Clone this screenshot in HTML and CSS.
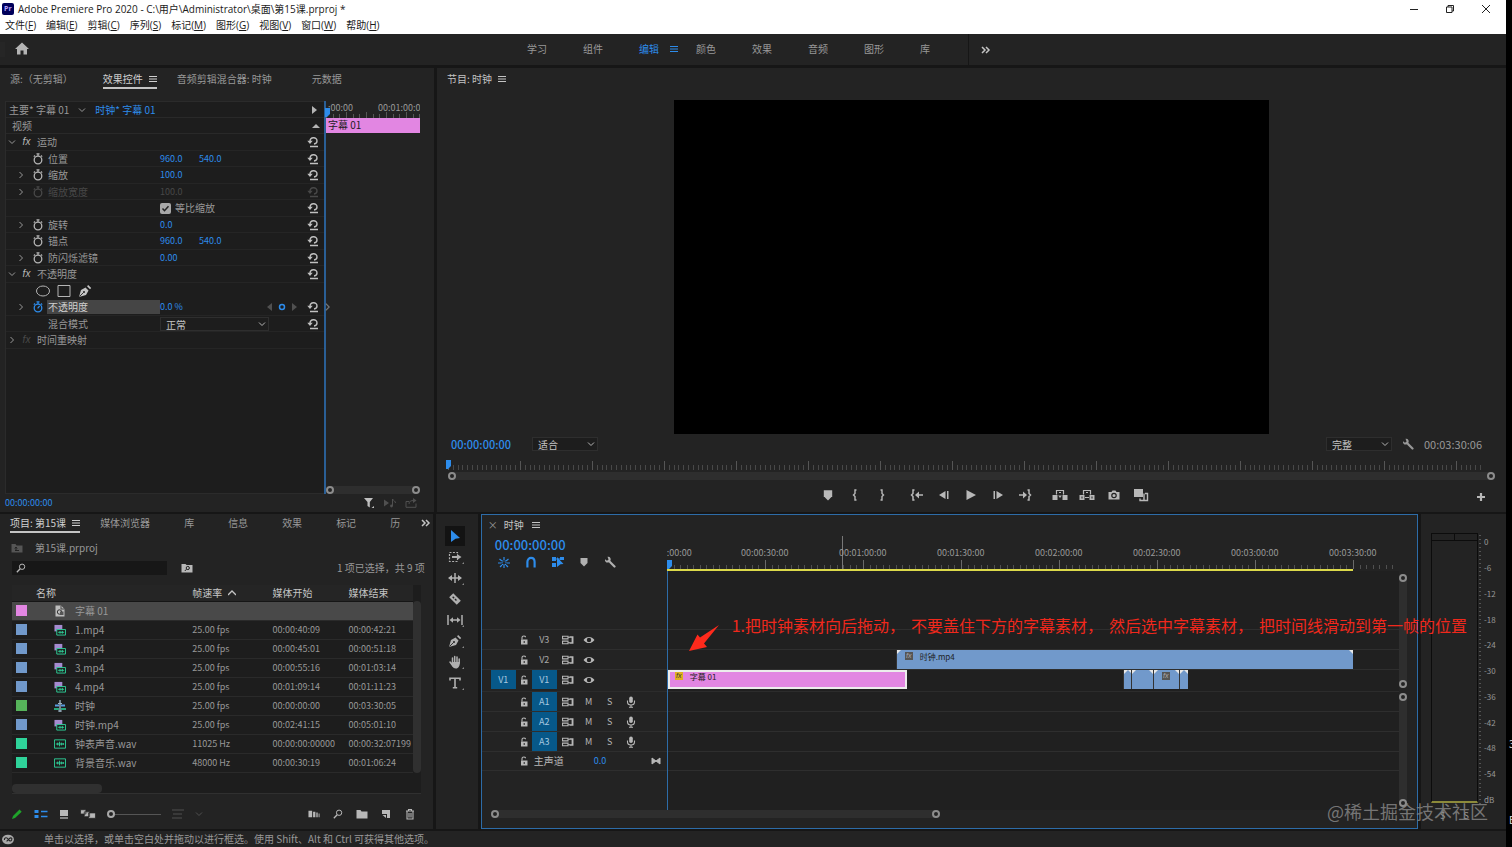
FILE: index.html
```html
<!DOCTYPE html>
<html lang="zh-CN">
<head>
    <meta charset="UTF-8">
    <meta name="viewport" content="width=device-width, initial-scale=1.0">
    <title>Adobe Premiere Pro 2020</title>
    <link rel="stylesheet" href="styles.css">
</head>
<body>
    <svg class="sprite" aria-hidden="true">
        <symbol id="menu" viewBox="0 0 8 8"><path d="M0 1.5h8M0 4h8M0 6.5h8" stroke="currentColor" fill="none"/></symbol>
        <symbol id="more" viewBox="0 0 10 8"><path d="M1 1l3 3-3 3M5 1l3 3-3 3" stroke="currentColor" stroke-width="1.5" fill="none"/></symbol>
        <symbol id="down" viewBox="0 0 8 8"><path d="M1 2.5l3 3 3-3" stroke="currentColor" fill="none"/></symbol>
        <symbol id="right" viewBox="0 0 8 8"><path d="M2.5 1l3 3-3 3" stroke="currentColor" fill="none"/></symbol>
        <symbol id="up" viewBox="0 0 8 8"><path d="M0 6l4-4 4 4" stroke="currentColor" stroke-width="1.3" fill="none"/></symbol>
        <symbol id="watch" viewBox="0 0 12 12"><circle cx="6" cy="7" r="3.8" stroke="currentColor" stroke-width="1.3" fill="none"/><path d="M4.5.8h3M6 1v2M9 2.5l1.2 1.2M3 2.5L1.8 3.7" stroke="currentColor" stroke-width="1.2"/></symbol>
        <symbol id="watch-on" viewBox="0 0 12 12"><circle cx="6" cy="7" r="3.8" stroke="currentColor" stroke-width="1.3" fill="none"/><path d="M4.5.8h3M6 1v2M9 2.5l1.2 1.2M3 2.5L1.8 3.7M5.6 7.4l2-2.4" stroke="currentColor" stroke-width="1.2"/></symbol>
        <symbol id="reset" viewBox="0 0 12 12"><path d="M3 5.500C3 .800 10 .500 10 5c0 1.800-1.200 2.800-3 3M3 10.500h8" stroke="currentColor" stroke-width="1.400" fill="none"/><path d="M.300 4.800h5.400L3 8z" fill="currentColor"/></symbol>
        <symbol id="pen" viewBox="0 0 14 14"><path d="M1 13l2-7 4.500-2.500 3 3L8 11z" fill="currentColor"/><path d="M9 2.200L10.200 1l3 3L12 5.200z" fill="currentColor"/><path d="M1.500 12.500l4-4" stroke="#222" stroke-width=".9"/><circle cx="6" cy="8" r="1" fill="#222"/></symbol>
        <symbol id="funnel" viewBox="0 0 12 12"><path d="M1 1h9L6.800 5v5.500L4.500 9V5z" fill="currentColor"/><path d="M8.500 11l2.500 0 0-2z" fill="currentColor"/></symbol>
        <symbol id="playnote" viewBox="0 0 14 10"><path d="M1 1.500l5 3.500-5 3.500z" fill="currentColor"/><path d="M9.500 8V1c1 2 3 2 3 4" stroke="currentColor" fill="none"/><circle cx="8.500" cy="8" r="1.400" fill="currentColor"/></symbol>
        <symbol id="share" viewBox="0 0 12 10"><path d="M4 3.500H1V9.300h10V5.500M4 6c0-3 2-3.500 5-3.500" stroke="currentColor" fill="none"/><path d="M8 0l3.500 2.500L8 5z" fill="currentColor"/></symbol>
        <symbol id="mark" viewBox="0 0 10 10"><path d="M1.500 1h7v5L5 9.500 1.500 6z" fill="currentColor"/></symbol>
        <symbol id="in" viewBox="0 0 10 12"><path d="M6.500 1H5v3.500L3.500 6 5 7.500V11h1.500" stroke="currentColor" stroke-width="1.400" fill="none"/></symbol>
        <symbol id="out" viewBox="0 0 10 12"><path d="M3.500 1H5v3.500L6.500 6 5 7.500V11H3.500" stroke="currentColor" stroke-width="1.400" fill="none"/></symbol>
        <symbol id="goin" viewBox="0 0 14 12"><path d="M4.500 1H3v3.500L1.500 6 3 7.500V11h1.500M8 6h5" stroke="currentColor" stroke-width="1.500" fill="none"/><path d="M5 6l4-3.500v7z" fill="currentColor"/></symbol>
        <symbol id="goout" viewBox="0 0 14 12"><path d="M9.500 1H11v3.500L12.500 6 11 7.500V11H9.500M1 6h5" stroke="currentColor" stroke-width="1.500" fill="none"/><path d="M9 6L5 2.500v7z" fill="currentColor"/></symbol>
        <symbol id="back" viewBox="0 0 12 12"><path d="M1 6l6.500-4v8zM9 2h1.500v8H9z" fill="currentColor"/></symbol>
        <symbol id="play" viewBox="0 0 12 12"><path d="M1.500 1L11 6l-9.500 5z" fill="currentColor"/></symbol>
        <symbol id="step" viewBox="0 0 12 12"><path d="M11 6L4.500 2v8zM1.500 2H3v8H1.500z" fill="currentColor"/></symbol>
        <symbol id="lift" viewBox="0 0 16 12"><path d="M.500 6h5v5H.500zM10.500 6h5v5h-5z" fill="currentColor"/><path d="M4.500 5.500v-4h7v4M7 3.500h2" stroke="currentColor" stroke-width="1.200" fill="none"/><path d="M6.200 6.500h3.600L8 9z" fill="currentColor"/></symbol>
        <symbol id="extract" viewBox="0 0 16 12"><path d="M.500 6h5v5H.500zM10.500 6h5v5h-5z" fill="currentColor"/><path d="M4.500 5.500v-4h7v4M6 8.500h4M7 3.500h2" stroke="currentColor" stroke-width="1.200" fill="none"/><path d="M3 7.500v2M13 7.500v2" stroke="#222"/></symbol>
        <symbol id="camera" viewBox="0 0 12 12"><path d="M.500 3H3.500l1-1.500h3l1 1.500h3v7.500H.500z" fill="currentColor"/><circle cx="6" cy="6.500" r="2.200" fill="none" stroke="#222" stroke-width="1.200"/></symbol>
        <symbol id="compare" viewBox="0 0 16 14"><path d="M1 1h9v8H1z" fill="currentColor"/><path d="M12 5.500h2.500v7H7V10.500M11 5.500V12" stroke="currentColor" stroke-width="1.400" fill="none"/></symbol>
        <symbol id="plus" viewBox="0 0 10 10"><path d="M5 1v8M1 5h8" stroke="currentColor" stroke-width="2.200"/></symbol>
        <symbol id="wrench" viewBox="0 0 12 12"><path d="M5.500 5.500L10.500 10.500" stroke="currentColor" stroke-width="2.200" stroke-linecap="round"/><path d="M3.500 0.800C6 .300 7.300 2.500 6.500 4.500L4.500 6.500C2.500 7 .500 5.500 1 3.200l2 1.600 1.600-1.200z" fill="currentColor"/></symbol>
        <symbol id="glass" viewBox="0 0 12 12"><circle cx="7.300" cy="4.500" r="3.200" stroke="currentColor" stroke-width="1.200" fill="none"/><path d="M5 7l-4 4" stroke="currentColor" stroke-width="1.600"/></symbol>
        <symbol id="folder" viewBox="0 0 12 10"><path d="M.500 1h4l1 1.500h6V9.500H.500z" fill="currentColor"/></symbol>
        <symbol id="folder-up" viewBox="0 0 12 10"><path d="M.500 1h4l1 1.500h6V9.500H.500z" fill="currentColor"/><path d="M4 7.500h4M5 7.500V4.500M3.800 5.500L5 4l1.200 1.500" stroke="#222" fill="none"/></symbol>
        <symbol id="folder-find" viewBox="0 0 12 10"><path d="M.500 1h4l1 1h6V9.500H.500z" fill="currentColor"/><circle cx="6.800" cy="5" r="1.600" stroke="#222" fill="none"/><path d="M5.500 6.200L3.800 8" stroke="#222"/></symbol>
        <symbol id="title" viewBox="0 0 12 12"><path d="M1.500.500h5.500l3.500 3.500v7.500h-9z" fill="#bdbdbd"/><path d="M7 .500V4h3.500" stroke="#444" fill="none"/><circle cx="5.500" cy="7" r="2.200" fill="none" stroke="#333"/><path d="M6 6.500h3.500v3.500H6z" fill="#555"/></symbol>
        <symbol id="av" viewBox="0 0 13 12"><path d="M.500.500h8.500v7h-8.500z" fill="#a58bd0"/><path d="M3 5.500h9.500v6H3z" fill="#1d1d1d" stroke="#2fd39a"/><path d="M4.500 8.500h6.500M6.500 7v3M9 7v3" stroke="#2fd39a"/></symbol>
        <symbol id="seq" viewBox="0 0 12 12"><path d="M6 0v12" stroke="#9cb4c6" stroke-width="1.400"/><path d="M1 5.500h4M7 5.500h4" stroke="#5b9be0" stroke-width="2"/><path d="M0 9h5M7 9h5" stroke="#2fd39a" stroke-width="1.500"/><path d="M4 3.500h4M4 11h4" stroke="#9cb4c6"/></symbol>
        <symbol id="wav" viewBox="0 0 13 10"><path d="M.500.500h12v9H.500z" fill="none" stroke="#2fd39a"/><path d="M2 5h9M4 3.500v3M6 2.500v5M8 3.500v3M10 4v2" stroke="#2fd39a"/></symbol>
        <symbol id="pencil" viewBox="0 0 12 12"><path d="M1 11l1-3 6.500-6.500 2.200 2.200L4 10z" fill="#1fa32a"/></symbol>
        <symbol id="list" viewBox="0 0 14 10"><path d="M.500 1h4v3h-4zM.500 6h4v3h-4z" fill="currentColor"/><path d="M7 2.500h6.500M7 7.500h6.500" stroke="currentColor" stroke-width="1.300"/></symbol>
        <symbol id="iconview" viewBox="0 0 10 10"><path d="M1 1h8v6H1z" fill="currentColor"/><path d="M1 9h8" stroke="currentColor" stroke-width="1.300"/></symbol>
        <symbol id="freeform" viewBox="0 0 15 10"><path d="M.500 1h5v4h-5zM4 3h5v4.500H4zM8 4h6.500v5H8z" fill="currentColor" stroke="#232323" stroke-width=".7"/></symbol>
        <symbol id="sort" viewBox="0 0 12 10"><path d="M0 1h12M1 5h9M0 9h10" stroke="currentColor" stroke-width="1.200"/></symbol>
        <symbol id="automate" viewBox="0 0 13 8"><path d="M.500.500h4v7h-4zM5.500 1.500H8v6H5.500zM9 2.500h1.500v5H9zM11.500 3.500h1v4h-1z" fill="currentColor"/></symbol>
        <symbol id="newitem" viewBox="0 0 10 10"><path d="M1 1h8v8H6V5H1z" fill="currentColor"/><path d="M1.500 6H5v3z" fill="currentColor"/></symbol>
        <symbol id="trash" viewBox="0 0 10 12"><path d="M1 3h8M3.500 3V1.500h3V3M2 3v8h6V3M4 5v4.500M6 5v4.500" stroke="currentColor" stroke-width="1.100" fill="none"/></symbol>
        <symbol id="arrow" viewBox="0 0 14 14"><path d="M3 1l9 8-4.500.700L3 13z" fill="#2d8ceb"/></symbol>
        <symbol id="tracksel" viewBox="0 0 14 12"><path d="M1.500 1.500h8v9h-8z" stroke="currentColor" stroke-width="1.200" stroke-dasharray="2 1.400" fill="none"/><path d="M4 5h5V3l4.500 3L9 9V7H4z" fill="currentColor"/></symbol>
        <symbol id="ripple" viewBox="0 0 14 12"><path d="M7 1v10M1 6h12" stroke="currentColor" stroke-width="1.500"/><path d="M0 6l4-3v6zM14 6l-4-3v6z" fill="currentColor"/></symbol>
        <symbol id="razor" viewBox="0 0 12 12"><path d="M4.500 1L11 7.500 7.500 11 1 4.500z" fill="currentColor"/><path d="M4 4l4 4" stroke="#222" stroke-width="1.200" stroke-dasharray="1.800 1"/></symbol>
        <symbol id="slip" viewBox="0 0 16 12"><path d="M1 1v10M15 1v10M4 6h8" stroke="currentColor" stroke-width="1.500"/><path d="M2.500 6L6 3.200v5.600zM13.500 6L10 3.200v5.600z" fill="currentColor"/></symbol>
        <symbol id="hand" viewBox="0 0 14 14"><path d="M4.500 8V3M6.700 7V1.500M9 7V2M11.200 8V4M2 7l3 4" stroke="currentColor" stroke-width="1.500" stroke-linecap="round"/><path d="M3.800 7h8.100c0 4-1.500 6.500-4 6.500-2 0-3-1-4.500-4z" fill="currentColor"/></symbol>
        <symbol id="type" viewBox="0 0 12 12"><path d="M1 3.500V1.200h10v2.300M6 1.200v9.500M3.800 10.800h4.400" stroke="currentColor" stroke-width="1.600" fill="none"/></symbol>
        <symbol id="nest" viewBox="0 0 12 12"><path d="M6 1v3M1.500 3l2.500 2M10.500 3L8 5M0 7h3M9 7h3M2 11l2-2M10 11L8 9M6 9v3" stroke="currentColor" stroke-width="1.200"/><path d="M4 5h4v3.500H4z" fill="none" stroke="currentColor" stroke-dasharray="1.500 1"/></symbol>
        <symbol id="magnet" viewBox="0 0 10 10"><path d="M2 9.500V5c0-4.500 6-4.500 6 0v4.500" stroke="currentColor" stroke-width="1.800" fill="none"/></symbol>
        <symbol id="linked" viewBox="0 0 12 12"><path d="M0 1h4v4H0zM0 7h4v4H0zM8 1h4v3H8z" fill="currentColor"/><path d="M5 1l6.500 7-3 .300L5 11z" fill="currentColor"/><path d="M3 3h6" stroke="currentColor"/></symbol>
        <symbol id="lock" viewBox="0 0 8 10"><path d="M1 4.500h6.500V9.500H1z" fill="currentColor"/><path d="M2 4.500V2.500c0-2 3.500-2 3.500-.300" stroke="currentColor" stroke-width="1.100" fill="none"/><path d="M4.200 6v2" stroke="#222"/></symbol>
        <symbol id="sync" viewBox="0 0 11 9"><path d="M.500 1h5v2.500h-5zM.500 5.500h5V8h-5zM5.500 2h2M5.500 7h2" stroke="currentColor" fill="none"/><path d="M7 1h3.500v7H7V6.500h1.800v-4H7z" fill="currentColor"/></symbol>
        <symbol id="eye" viewBox="0 0 11 8"><path d="M.500 4C3 .200 8 .200 10.500 4 8 7.800 3 7.800.500 4z" fill="currentColor"/><circle cx="5.500" cy="4" r="2" fill="#222"/></symbol>
        <symbol id="mic" viewBox="0 0 9 12"><rect x="2.700" y=".500" width="3.600" height="6.500" rx="1.800" fill="currentColor"/><path d="M1 4.500v1.500c0 4 7 4 7 0V4.500M4.500 9v2M2.500 11.300h4" stroke="currentColor" stroke-width="1.100" fill="none"/></symbol>
        <symbol id="bowtie" viewBox="0 0 10 8"><path d="M1 1l4 3-4 3zM9 1L5 4l4 3z" fill="currentColor" stroke="currentColor"/></symbol>
        <symbol id="playhead" viewBox="0 0 5 9"><path d="M0 0h5v6L2 9H0z" fill="#2d8ceb"/></symbol>
    </svg>

    <div class="screen">
        <div class="app">
            <header class="window-head">
                <div class="title-bar">
                    <svg class="logo" viewBox="0 0 12 12" aria-hidden="true"><rect width="12" height="12" rx="2" fill="#00005b"/><text x="2" y="8" fill="#b9a5ff" font-size="7" font-weight="700">Pr</text></svg>
                    <span>Adobe Premiere Pro 2020 - C:\用户\Administrator\桌面\第15课.prproj *</span>
                    <div class="window-buttons">
                        <button aria-label="最小化"><svg viewBox="0 0 10 10"><path d="M1 5.500h8" stroke="#222"/></svg></button>
                        <button aria-label="还原"><svg viewBox="0 0 10 10"><path d="M1.500 3h5.500v5.500H1.500zM3 3V1.500h5.500V7H7" stroke="#222" fill="none"/></svg></button>
                        <button aria-label="关闭"><svg viewBox="0 0 10 10"><path d="M1 1l8 8M9 1L1 9" stroke="#222"/></svg></button>
                    </div>
                </div>
                <nav class="menu-bar">
                    <button>文件(<u>F</u>)</button>
                    <button>编辑(<u>E</u>)</button>
                    <button>剪辑(<u>C</u>)</button>
                    <button>序列(<u>S</u>)</button>
                    <button>标记(<u>M</u>)</button>
                    <button>图形(<u>G</u>)</button>
                    <button>视图(<u>V</u>)</button>
                    <button>窗口(<u>W</u>)</button>
                    <button>帮助(<u>H</u>)</button>
                </nav>
            </header>

            <div class="workspace-bar">
                <div class="home">
                    <button aria-label="主页"><svg class="home-icon" viewBox="0 0 14 12"><path d="M7 0l7 6.500h-2V12H8.500V8h-3v4H2V6.500H0z" fill="#b4b4b4"/></svg></button>
                </div>
                <nav class="workspaces">
                    <button>学习</button>
                    <button>组件</button>
                    <button class="current">编辑 <svg class="i8"><use href="#menu"/></svg></button>
                    <button>颜色</button>
                    <button>效果</button>
                    <button>音频</button>
                    <button>图形</button>
                    <button>库</button>
                </nav>
                <button class="workspace-more" aria-label="更多工作区"><svg class="i10"><use href="#more"/></svg></button>
            </div>

            <main class="panels">
                <div class="row upper">
                    <section class="panel effects">
                        <div class="tabs effects-tabs">
                            <button>源:（无剪辑）</button>
                            <button class="active">效果控件 <svg class="i8"><use href="#menu"/></svg></button>
                            <button>音频剪辑混合器: 时钟</button>
                            <button class="last">元数据</button>
                        </div>
                        <div class="effects-body">
                            <div class="fx-list">
                                <div class="fx-source">
                                    <span>主要* 字幕 01</span>
                                    <svg class="i8"><use href="#down"/></svg>
                                    <span class="blue">时钟* 字幕 01</span>
                                    <svg class="i8 end" viewBox="0 0 8 8"><path d="M2 0l5 4-5 4z" fill="#b4b4b4"/></svg>
                                </div>
                                <div class="fx-heading"><span>视频</span><svg class="i8" viewBox="0 0 8 8"><path d="M0 6l4-4 4 4z" fill="#b4b4b4"/></svg></div>
                                <div class="fx-rows" id="fx-rows"></div>
                            </div>
                            <div class="fx-time">
                                <div class="fx-labels"><span>:00:00</span><span>00:01:00:00</span></div>
                                <svg class="fx-ticks"><defs><pattern id="t-fx" width="20" height="6" patternUnits="userSpaceOnUse"><path d="M.5 0v6M7.500 2v4M13.500 2v4" stroke="#555"/></pattern></defs><rect width="100%" height="6" fill="url(#t-fx)"/></svg>
                                <svg class="fx-playhead"><use href="#playhead"/></svg>
                                <div class="fx-clip">字幕 01</div>
                                <svg class="fx-key" viewBox="0 0 6 8"><path d="M1 0l4 4-4 4" stroke="#777" stroke-width="1.500" fill="none"/></svg>
                                <div class="zoom-bar"><i></i><i></i></div>
                            </div>
                        </div>
                        <div class="effects-foot">
                            <span class="blue">00:00:00:00</span>
                            <div class="foot-icons">
                                <button aria-label="筛选"><svg class="i12"><use href="#funnel"/></svg></button>
                                <button class="off" aria-label="播放音频"><svg class="i14"><use href="#playnote"/></svg></button>
                                <button class="off" aria-label="导出"><svg class="i12"><use href="#share"/></svg></button>
                            </div>
                        </div>
                    </section>

                    <section class="panel program">
                        <div class="tabs"><button class="bright">节目: 时钟 <svg class="i8"><use href="#menu"/></svg></button></div>
                        <div class="monitor"><div class="frame"></div></div>
                        <div class="program-info">
                            <span class="timecode blue">00:00:00:00</span>
                            <select aria-label="缩放级别"><option>适合</option></select>
                            <select class="end" aria-label="回放分辨率"><option>完整</option></select>
                            <button aria-label="设置"><svg class="i12"><use href="#wrench"/></svg></button>
                            <span class="timecode">00:03:30:06</span>
                        </div>
                        <div class="program-ruler">
                            <svg class="program-ticks"><defs><pattern id="t-prog" width="72" height="10" patternUnits="userSpaceOnUse"><path d="M.5 1v9" stroke="#555"/><path d="M5.500 5v5M10.500 5v5M14.500 5v5M19.500 5v5M24.500 5v5M29.500 5v5M34.500 5v5M38.500 5v5M43.500 5v5M48.500 5v5M53.500 5v5M58.500 5v5M62.500 5v5M67.500 5v5" stroke="#484848"/></pattern></defs><rect width="100%" height="10" fill="url(#t-prog)"/></svg>
                            <svg class="program-playhead"><use href="#playhead"/></svg>
                            <div class="zoom-bar"><i></i><i></i></div>
                        </div>
                        <div class="transport">
                            <div class="transport-buttons">
                                <div class="group">
                                    <button aria-label="添加标记"><svg class="i12"><use href="#mark"/></svg></button>
                                    <button aria-label="标记入点"><svg class="i12"><use href="#in"/></svg></button>
                                    <button aria-label="标记出点"><svg class="i12"><use href="#out"/></svg></button>
                                </div>
                                <div class="group">
                                    <button aria-label="转到入点"><svg class="i14"><use href="#goin"/></svg></button>
                                    <button aria-label="后退一帧"><svg class="i12"><use href="#back"/></svg></button>
                                    <button aria-label="播放"><svg class="i12"><use href="#play"/></svg></button>
                                    <button aria-label="前进一帧"><svg class="i12"><use href="#step"/></svg></button>
                                    <button aria-label="转到出点"><svg class="i14"><use href="#goout"/></svg></button>
                                </div>
                                <div class="group">
                                    <button aria-label="提升"><svg class="i16"><use href="#lift"/></svg></button>
                                    <button aria-label="提取"><svg class="i16"><use href="#extract"/></svg></button>
                                    <button aria-label="导出帧"><svg class="i12"><use href="#camera"/></svg></button>
                                    <button aria-label="比较视图"><svg class="i16"><use href="#compare"/></svg></button>
                                </div>
                            </div>
                            <button class="add" aria-label="按钮编辑器"><svg class="i10"><use href="#plus"/></svg></button>
                        </div>
                    </section>
                </div>

                <div class="row lower">
                    <section class="panel project">
                        <div class="tabs project-tabs">
                            <button class="active">项目: 第15课 <svg class="i8"><use href="#menu"/></svg></button>
                            <button>媒体浏览器</button>
                            <button>库</button>
                            <button>信息</button>
                            <button>效果</button>
                            <button>标记</button>
                            <button class="cut">历</button>
                            <button class="bright end" aria-label="更多面板"><svg class="i10"><use href="#more"/></svg></button>
                        </div>
                        <div class="project-path"><svg class="i12"><use href="#folder-up"/></svg><span>第15课.prproj</span></div>
                        <div class="project-search">
                            <label class="search"><svg class="i10"><use href="#glass"/></svg><input type="text" aria-label="搜索"></label>
                            <button aria-label="搜索素材箱"><svg class="i12"><use href="#folder-find"/></svg></button>
                            <span class="end">1 项已选择，共 9 项</span>
                        </div>
                        <div class="bin">
                            <table>
                                <thead>
                                    <tr><th class="c-tag"></th><th class="c-name">名称</th><th class="c-rate">帧速率 <svg class="i8"><use href="#up"/></svg></th><th class="c-start">媒体开始</th><th>媒体结束</th></tr>
                                </thead>
                                <tbody id="bin-rows"></tbody>
                            </table>
                            <div class="bin-scroll"></div>
                            <div class="bin-hscroll"></div>
                        </div>
                        <div class="project-foot">
                            <button aria-label="可写"><svg class="i12"><use href="#pencil"/></svg></button>
                            <button class="blue" aria-label="列表视图"><svg class="i14"><use href="#list"/></svg></button>
                            <button aria-label="图标视图"><svg class="i10"><use href="#iconview"/></svg></button>
                            <button aria-label="自由变换视图"><svg class="i16"><use href="#freeform"/></svg></button>
                            <input type="range" value="0" aria-label="缩放">
                            <button class="off" aria-label="排序"><svg class="i12"><use href="#sort"/></svg></button>
                            <svg class="i8 off"><use href="#down"/></svg>
                            <div class="foot-tools">
                                <button aria-label="自动匹配序列"><svg class="i12"><use href="#automate"/></svg></button>
                                <button aria-label="查找"><svg class="i10"><use href="#glass"/></svg></button>
                                <button aria-label="新建素材箱"><svg class="i12"><use href="#folder"/></svg></button>
                                <button aria-label="新建项"><svg class="i10"><use href="#newitem"/></svg></button>
                                <button aria-label="清除"><svg class="i12"><use href="#trash"/></svg></button>
                            </div>
                        </div>
                    </section>

                    <section class="panel tools">
                        <button class="on" aria-label="选择工具"><svg class="i14"><use href="#arrow"/></svg></button>
                        <button class="sub" aria-label="向前选择轨道工具"><svg class="i14"><use href="#tracksel"/></svg></button>
                        <button class="sub" aria-label="波纹编辑工具"><svg class="i14"><use href="#ripple"/></svg></button>
                        <button aria-label="剃刀工具"><svg class="i14"><use href="#razor"/></svg></button>
                        <button class="sub" aria-label="外滑工具"><svg class="i16"><use href="#slip"/></svg></button>
                        <button class="sub" aria-label="钢笔工具"><svg class="i14"><use href="#pen"/></svg></button>
                        <button class="sub" aria-label="手形工具"><svg class="i14"><use href="#hand"/></svg></button>
                        <button class="sub" aria-label="文字工具"><svg class="i12"><use href="#type"/></svg></button>
                    </section>

                    <section class="panel timeline">
                        <div class="timeline-tab">
                            <button aria-label="关闭序列">×</button>
                            <button class="bright">时钟 <svg class="i8"><use href="#menu"/></svg></button>
                        </div>
                        <div class="timeline-top">
                            <div class="timeline-left">
                                <div class="big-timecode">00:00:00:00</div>
                                <div class="timeline-options">
                                    <button class="blue" aria-label="嵌套"><svg class="i12"><use href="#nest"/></svg></button>
                                    <button class="blue" aria-label="对齐"><svg class="i12"><use href="#magnet"/></svg></button>
                                    <button class="blue" aria-label="链接选择项"><svg class="i12"><use href="#linked"/></svg></button>
                                    <button aria-label="添加标记"><svg class="i10"><use href="#mark"/></svg></button>
                                    <button aria-label="时间轴显示设置"><svg class="i12"><use href="#wrench"/></svg></button>
                                </div>
                            </div>
                            <div class="ruler" id="ruler">
                                <svg class="ruler-ticks"><defs><pattern id="t-line" width="98" height="9" patternUnits="userSpaceOnUse"><path d="M.5 0v9" stroke="#6a6a6a"/><path d="M7.500 5v4M13.500 5v4M20.500 5v4M26.500 5v4M33.500 5v4M39.500 5v4M46.500 5v4M52.500 5v4M59.500 5v4M65.500 5v4M72.500 5v4M78.500 5v4M85.500 5v4M91.500 5v4" stroke="#505050"/></pattern></defs><rect width="100%" height="9" fill="url(#t-line)"/></svg>
                                <div class="hover-line"></div>
                                <div class="work-area"></div>
                                <svg class="ruler-playhead"><use href="#playhead"/></svg>
                            </div>
                        </div>
                        <div class="tracks">
                            <div class="track-heads">
                                <div class="stack video" id="video-heads"></div>
                                <div class="stack audio" id="audio-heads"></div>
                            </div>
                            <div class="lanes">
                                <div class="stack video">
                                    <div class="lane"></div>
                                    <div class="lane">
                                        <div class="clip cut-l cut-r" style="left: 228px; width: 457px"><b class="fx">fx</b><span>时钟.mp4</span></div>
                                    </div>
                                    <div class="lane">
                                        <div class="clip title" style="left: 0px; width: 239px"><b class="fx">fx</b><span>字幕 01</span></div>
                                        <div class="clip cut-l cut-r" style="left: 455px; width: 8px"></div>
                                        <div class="clip cut-l cut-r" style="left: 463px; width: 22px"></div>
                                        <div class="clip cut-l cut-r" style="left: 485px; width: 26px"><b class="fx">fx</b></div>
                                        <div class="clip cut-l cut-r" style="left: 511px; width: 8px"></div>
                                    </div>
                                </div>
                                <div class="stack audio">
                                    <div class="lane"></div>
                                    <div class="lane"></div>
                                    <div class="lane"></div>
                                    <div class="lane"></div>
                                </div>
                                <svg class="note-arrow" viewBox="0 0 32 28"><path d="M31 1L12 13.500 9.500 10.500 1 27l18-4-3-3.500z" fill="#ff2a1c"/></svg>
                                <p class="note"><span>1.把时钟素材向后拖动，</span><span>不要盖住下方的字幕素材，</span><span>然后选中字幕素材，</span><span>把时间线滑动到第一帧的位置</span></p>
                            </div>
                            <div class="vbars">
                                <div class="vbar"><i></i><i></i></div>
                                <div class="vbar"><i></i><i></i></div>
                            </div>
                        </div>
                        <div class="timeline-zoom"><div class="zoom-bar"><i></i><i></i></div></div>
                    </section>

                    <section class="panel meters">
                        <div class="meter"><div class="clip-lights"><i></i><i></i></div><div class="levels"></div><div class="solo"><span>S</span><span>S</span></div></div>
                        <div class="scale" id="scale"></div>
                    </section>
                </div>
            </main>

            <footer class="status">
                <svg class="cloud" viewBox="0 0 14 12"><ellipse cx="7" cy="6" rx="6.500" ry="5.300" fill="#a8a8a8"/><path d="M3 6.500c0-3 3-3 4-1s3 3 4 1-1-3-2.500-1.500L5.500 8" stroke="#222" stroke-width="1.200" fill="none"/></svg>
                <span>单击以选择，或单击空白处并拖动以进行框选。使用 Shift、Alt 和 Ctrl 可获得其他选项。</span>
            </footer>
            <div class="watermark">@稀土掘金技术社区</div>
        </div>
        <aside class="edge"><span>3</span><span>E</span></aside>
    </div>

    <script>
        const icon = (name, size) => `<svg class="i${size}"><use href="#${name}"/></svg>`;

        const effects = [
            { group: '运动', open: true },
            { name: '位置', watch: true, values: ['960.0', '540.0'] },
            { name: '缩放', caret: true, watch: true, values: ['100.0'] },
            { name: '缩放宽度', caret: true, watch: true, values: ['100.0'], off: true },
            { check: '等比缩放' },
            { name: '旋转', caret: true, watch: true, values: ['0.0'] },
            { name: '锚点', watch: true, values: ['960.0', '540.0'] },
            { name: '防闪烁滤镜', caret: true, watch: true, values: ['0.00'] },
            { group: '不透明度', open: true },
            { masks: true },
            { name: '不透明度', caret: true, watch: true, values: ['0.0 %'], selected: true },
            { name: '混合模式', select: '正常' },
            { group: '时间重映射', noReset: true, dim: true }
        ];

        function effectRow(row){
            let left = '';
            let value = '';
            if (row.group) {
                left = `${icon(row.open ? 'down' : 'right', 8)}<em class="${row.dim ? 'off' : ''}">fx</em><span>${row.group}</span>`;
            } else if (row.masks) {
                left = `<button aria-label="椭圆蒙版"><svg class="i14" viewBox="0 0 14 12"><ellipse cx="7" cy="6" rx="6.500" ry="5" fill="none" stroke="#b4b4b4"/></svg></button>
                    <button aria-label="矩形蒙版"><svg class="i14" viewBox="0 0 14 12"><path d="M1 .500h12v11H1z" fill="none" stroke="#b4b4b4"/></svg></button>
                    <button aria-label="自由绘制贝塞尔曲线">${icon('pen', 14)}</button>`;
            } else if (row.name) {
                left = `<i class="caret">${row.caret ? icon('right', 8) : ''}</i><i class="watch">${row.watch ? icon(row.selected ? 'watch-on' : 'watch', 12) : ''}</i><span class="name">${row.name}</span>`;
            }
            if (row.values) value = row.values.map(v => `<button class="hot">${v}</button>`).join('');
            if (row.check) value = `<label class="check"><input type="checkbox" checked>${row.check}</label>`;
            if (row.select) value = `<select aria-label="${row.name}"><option>${row.select}</option></select>`;
            if (row.selected) value += `<div class="keys"><svg class="i8 off" viewBox="0 0 8 8"><path d="M6 0v8L1 4z" fill="currentColor"/></svg><svg class="i8 blue" viewBox="0 0 8 8"><circle cx="4" cy="4" r="2.500" stroke="currentColor" stroke-width="1.500" fill="none"/></svg><svg class="i8 off" viewBox="0 0 8 8"><path d="M2 0v8l5-4z" fill="currentColor"/></svg></div>`;
            const type = row.group ? 'group' : row.masks ? 'masks' : 'param';
            const reset = row.noReset || row.masks ? '' : `<button class="reset" aria-label="重置">${icon('reset', 12)}</button>`;
            return `<div class="fx-row ${type}${row.off ? ' disabled' : ''}${row.selected ? ' selected' : ''}"><div class="fx-name">${left}</div><div class="fx-value">${value}</div>${reset}</div>`;
        }
        document.querySelector('#fx-rows').innerHTML = effects.map(effectRow).join('');

        const clips = [
            ['pink', 'title', '字幕 01', '', '', ''],
            ['sky', 'av', '1.mp4', '25.00 fps', '00:00:40:09', '00:00:42:21'],
            ['sky', 'av', '2.mp4', '25.00 fps', '00:00:45:01', '00:00:51:18'],
            ['sky', 'av', '3.mp4', '25.00 fps', '00:00:55:16', '00:01:03:14'],
            ['sky', 'av', '4.mp4', '25.00 fps', '00:01:09:14', '00:01:11:23'],
            ['green', 'seq', '时钟', '25.00 fps', '00:00:00:00', '00:03:30:05'],
            ['sky', 'av', '时钟.mp4', '25.00 fps', '00:02:41:15', '00:05:01:10'],
            ['mint', 'wav', '钟表声音.wav', '11025 Hz', '00:00:00:00000', '00:00:32:07199'],
            ['mint', 'wav', '背景音乐.wav', '48000 Hz', '00:00:30:19', '00:01:06:24']
        ];
        document.querySelector('#bin-rows').innerHTML = clips.map(([tag, type, name, rate, start, end]) => `
            <tr>
                <td><i class="tag ${tag}"></i></td>
                <td><div class="clip-name">${icon(type, 12)}<span>${name}</span></div></td>
                <td class="num">${rate}</td>
                <td class="num">${start}</td>
                <td class="num">${end}</td>
            </tr>`).join('');

        function trackHead(name, video){
            const on = name !== 'V3' && name !== 'V2';
            const buttons = video
                ? `<button aria-label="切换轨道输出">${icon('eye', 12)}</button>`
                : `<button>M</button><button>S</button><button aria-label="画外音录制">${icon('mic', 12)}</button>`;
            return `<div class="track-head">
                <button class="patch${name === 'V1' ? ' on' : ''}">${name === 'V1' ? 'V1' : ''}</button>
                <button class="lock" aria-label="锁定">${icon('lock', 10)}</button>
                <button class="patch${on ? ' on' : ''}">${name}</button>
                <div class="track-buttons"><button aria-label="同步锁定">${icon('sync', 12)}</button>${buttons}</div>
            </div>`;
        }
        document.querySelector('#video-heads').innerHTML = ['V3', 'V2', 'V1'].map(n => trackHead(n, true)).join('');
        document.querySelector('#audio-heads').innerHTML = ['A1', 'A2', 'A3'].map(n => trackHead(n, false)).join('') +
            `<div class="track-head master"><span class="patch"></span><button class="lock" aria-label="锁定">${icon('lock', 10)}</button><span>主声道</span><span class="blue gain">0.0</span><button class="end" aria-label="折叠轨道">${icon('bowtie', 10)}</button></div>`;

        // one label for every 30 seconds, 98px apart
        const ruler = document.querySelector('#ruler');
        const times = [':00:00', '00:00:30:00', '00:01:00:00', '00:01:30:00', '00:02:00:00', '00:02:30:00', '00:03:00:00', '00:03:30:00'];
        times.forEach((time, i) => {
            ruler.insertAdjacentHTML('beforeend', `<span class="${i ? 'time' : 'time first'}" style="left: ${i * 98}px">${time}</span>`);
        });

        const levels = ['0', '-6', '-12', '-18', '-24', '-30', '-36', '-42', '-48', '-54', 'dB'];
        document.querySelector('#scale').innerHTML = levels.map(l => `<span>${l}</span>`).join('');
    </script>
</body>
</html>
```
FILE: styles.css
```css
*{
    box-sizing: border-box;
}
body{
    margin: 0;
    background: #000;
    color: #989898;
    font: 10px/14px "Noto Sans CJK SC", sans-serif;
}
button, select, input{
    margin: 0;
    padding: 0;
    border: 0;
    background: none;
    color: inherit;
    font: inherit;
}
button{
    display: inline-flex;
    align-items: center;
    justify-content: center;
    white-space: nowrap;
}
p{
    margin: 0;
}
i, em{
    font-style: normal;
}
svg{
    display: block;
    flex: none;
}
.sprite{
    position: absolute;
    width: 0;
    height: 0;
}
.i8{ width: 8px; height: 8px; }
.i10{ width: 10px; height: 10px; }
.i12{ width: 12px; height: 12px; }
.i14{ width: 14px; height: 14px; }
.i16{ width: 16px; height: 14px; }
.blue{ color: #2d8ceb; }
.bright{ color: #c4c4c4; }
.off{ color: #505050; }
.end{ margin-left: auto; }

.screen{
    display: flex;
    min-height: 100vh;
}
.app{
    position: relative;
    flex: 1;
    min-width: 0;
    display: flex;
    flex-direction: column;
    background: #161616;
}
.edge{
    width: 6px;
    padding-left: 3px;
    padding-bottom: 20px;
    overflow: hidden;
    display: flex;
    flex-direction: column;
    justify-content: flex-end;
    gap: 62px;
    color: #ddd;
}

/* title and menus */
.window-head{
    height: 34px;
    background: #fff;
    color: #1a1a1a;
    font-family: "Open Sans", "Noto Sans CJK SC", sans-serif;
}
.title-bar{
    height: 18px;
    display: flex;
    align-items: center;
    gap: 4px;
    padding-left: 2px;
    font-size: 10px;
}
.logo{
    width: 12px;
    height: 12px;
}
.window-buttons{
    margin-left: auto;
    padding-right: 15px;
    display: flex;
    gap: 26px;
}
.window-buttons svg{
    width: 10px;
    height: 10px;
}
.menu-bar{
    display: flex;
    gap: 10px;
    padding-left: 5px;
    line-height: 15px;
}

.workspace-bar{
    height: 31px;
    display: flex;
    align-items: center;
    background: #232323;
}
.home{
    width: 35%;
    height: 15px;
    padding-left: 10px;
    border-left: 5px solid #262626;
}
.home-icon{
    width: 14px;
    height: 13px;
}
.workspaces{
    display: flex;
    gap: 36px;
    padding-right: 38px;
    padding-bottom: 2px;
    height: 100%;
    border-right: 1px solid #161616;
}
.workspaces .current{
    color: #2d8ceb;
    gap: 11px;
    margin-right: -18px;
}
.workspace-more{
    padding-left: 12px;
    color: #c4c4c4;
}

.panels{
    flex: 1;
    display: grid;
    grid-template-rows: minmax(auto, 445fr) minmax(auto, 315fr);
    gap: 2px;
    padding-top: 3px;
}
.row{
    display: flex;
    gap: 3px;
    min-height: 0;
}
.panel{
    min-width: 0;
    background: #232323;
    display: flex;
    flex-direction: column;
}
.effects, .project{
    flex: 434;
}
.program{
    flex: 1069;
}
.tabs{
    display: flex;
    align-items: flex-start;
    padding-left: 10px;
    height: 33px;
    padding-top: 2px;
}
.tabs button{
    height: 18px;
    gap: 6px;
}
.tabs .active{
    color: #d0d0d0;
    border-bottom: 2px solid #c4c4c4;
    height: 19px;
}

/* effect controls */
.effects-tabs{
    gap: 20px;
}
.effects-tabs button:first-child{
    margin-right: 10px;
}
.effects-tabs .last{
    margin-left: 20px;
}
.effects-body{
    flex: 1;
    display: flex;
    padding: 0 14px 0 5px;
}
.fx-list{
    flex: 1;
    background: #1d1d1d;
    border: 1px solid #2b2b2b;
    border-right: 0;
    min-width: 0;
}
.fx-source, .fx-heading{
    height: 16px;
    display: flex;
    align-items: center;
    border-bottom: 1px solid #292929;
}
.fx-source{
    gap: 9px;
    padding: 0 6px 0 3px;
}
.fx-heading{
    justify-content: space-between;
    padding: 0 4px 0 6px;
}
.fx-row{
    display: flex;
    align-items: center;
    height: 16px;
    padding-right: 5px;
    border-bottom: 1px solid #252525;
}
.fx-row:nth-child(odd){
    height: 17px;
}
.fx-row.masks{
    border-bottom-color: transparent;
}
.fx-name{
    width: 154px;
    align-self: stretch;
    display: flex;
    align-items: center;
}
.fx-value{
    flex: 1;
    display: flex;
    align-items: center;
    align-self: stretch;
}
.group .fx-name{
    padding-left: 2px;
    gap: 4px;
}
.fx-name em{
    width: 13px;
    font-style: italic;
    font-weight: 500;
    font-family: "Liberation Sans", sans-serif;
    text-align: center;
    color: #b8b8b8;
}
.fx-name em.off{
    color: #4a4a4a;
}
.caret{
    width: 8px;
    margin-left: 11px;
}
.watch{
    width: 12px;
    margin: 0 3px 0 7px;
    color: #b4b4b4;
}
.name{
    padding-left: 1px;
}
.masks .fx-name{
    padding-left: 30px;
    gap: 7px;
    color: #c4c4c4;
}
.selected .name{
    flex: 1;
    background: #454545;
    color: #d0d0d0;
}
.selected .watch{
    color: #2d8ceb;
}
.hot{
    min-width: 39px;
    justify-content: flex-start;
    color: #2d8ceb;
    font-size: 9px;
}
.disabled .name, .disabled .watch, .disabled .hot, .disabled .reset{
    color: #484848;
}
.reset{
    color: #c0c0c0;
}
.keys{
    display: flex;
    gap: 4px;
    margin-left: auto;
    padding-right: 9px;
}
.check{
    display: flex;
    align-items: center;
    gap: 4px;
}
.check input{
    appearance: none;
    width: 11px;
    height: 11px;
    border-radius: 2px;
    background: #a8a8a8 url("data:image/svg+xml,%3Csvg xmlns='http://www.w3.org/2000/svg' viewBox='0 0 11 11'%3E%3Cpath d='M2.500 5.500l2 2.200 4-4.500' stroke='%23222' stroke-width='1.500' fill='none'/%3E%3C/svg%3E");
}
select{
    appearance: none;
    width: 66px;
    height: 14px;
    padding-left: 5px;
    border: 1px solid #2e2e2e;
    color: #c4c4c4;
    background: #1d1d1d url("data:image/svg+xml,%3Csvg xmlns='http://www.w3.org/2000/svg' viewBox='0 0 8 8'%3E%3Cpath d='M1 2.500l3 3 3-3' stroke='%23b4b4b4' fill='none'/%3E%3C/svg%3E") no-repeat right 2px center / 8px 8px;
}
.fx-value select{
    width: 109px;
}
.fx-time{
    position: relative;
    width: 96px;
    display: flex;
    flex-direction: column;
    border-left: 2px solid #2a5f96;
}
.fx-labels{
    display: flex;
    gap: 25px;
    height: 11px;
    padding-left: 2px;
    overflow: hidden;
    white-space: nowrap;
    font-size: 9px;
    line-height: 13px;
}
.fx-ticks{
    width: 100%;
    height: 6px;
}
.fx-playhead{
    position: absolute;
    top: 7px;
    left: -1px;
    width: 5px;
    height: 9px;
}
.fx-clip{
    height: 15px;
    padding-left: 2px;
    background: #e286e2;
    color: #1d1d1d;
}
.fx-key{
    position: absolute;
    top: 202px;
    left: -1px;
    width: 5px;
    height: 8px;
}
.zoom-bar{
    display: flex;
    justify-content: space-between;
    height: 8px;
    border-radius: 4px;
    background: #2e2e2e;
}
.zoom-bar i, .vbar i{
    width: 8px;
    height: 8px;
    border: 2px solid #8c8c8c;
    border-radius: 50%;
    background: #232323;
}
.fx-time .zoom-bar{
    margin-top: auto;
}
.effects-foot{
    height: 18px;
    display: flex;
    align-items: center;
    padding: 0 17px 0 5px;
    font-size: 9px;
}
.foot-icons{
    display: flex;
    gap: 8px;
    margin-left: auto;
    color: #c0c0c0;
}
.foot-icons .off{
    color: #505050;
}

/* program monitor */
.monitor{
    flex: 1;
    min-height: 0;
    display: flex;
    justify-content: center;
}
.program .tabs{
    height: 32px;
}
.frame{
    aspect-ratio: 16 / 9;
    background: #000;
}
.program-info{
    display: flex;
    align-items: center;
    height: 20px;
    padding: 0 24px 0 14px;
    gap: 10px;
}
.program-info .timecode + select{
    margin-left: 11px;
}
.timecode{
    font-size: 11px;
    font-weight: 500;
}
.program-info .timecode:last-child{
    font-weight: 400;
}
.program-ruler{
    position: relative;
    height: 27px;
    padding: 6px 11px 0;
}
.program-ticks{
    width: calc(100% - 10px);
    height: 10px;
    margin-bottom: 2px;
}
.program-playhead{
    position: absolute;
    left: 9px;
    top: 6px;
    width: 5px;
    height: 9px;
}
.transport{
    display: grid;
    grid-template-columns: 1fr auto 1fr;
    align-items: center;
    height: 31px;
    padding-left: 46px;
    padding-right: 20px;
    color: #b8b8b8;
}
.transport-buttons{
    grid-column: 2;
    display: flex;
    gap: 21px;
    padding-bottom: 3px;
}
.group{
    gap: 13px;
}
.transport .group{
    display: flex;
}
.transport .group button{
    width: 14px;
}
.add{
    justify-self: end;
}

/* project */
.project-tabs{
    height: 27px;
    padding-top: 0;
    padding-right: 2px;
    gap: 34px;
}
.project-tabs .active{
    margin-right: -14px;
}
.project-tabs .cut{
    margin-right: -14px;
}
.project-path, .project-search{
    display: flex;
    align-items: center;
    height: 14px;
    padding-left: 11px;
    gap: 12px;
}
.project-path svg{
    color: #555;
}
.project-search{
    margin-top: 6px;
    padding: 0 8px 0 12px;
    gap: 14px;
    color: #b8b8b8;
}
.project-search .end{
    color: #989898;
}
.search{
    width: 155px;
    height: 14px;
    display: flex;
    align-items: center;
    padding-left: 4px;
    background: #171717;
}
.search input{
    width: 100%;
    min-width: 0;
}
.bin{
    flex: 1;
    display: grid;
    grid-template-columns: 1fr 8px;
    grid-template-rows: auto 1fr;
    margin: 10px 12px 0;
    background: #1d1d1d;
    border-bottom: 1px solid #303030;
}
table{
    width: 100%;
    table-layout: fixed;
    border-collapse: collapse;
}
th, td{
    padding: 0;
    height: 19px;
    text-align: left;
    white-space: nowrap;
    font-weight: 400;
}
th{
    height: 16px;
    background: #252525;
    color: #c4c4c4;
    border-bottom: 1px solid #161616;
}
th svg{
    display: inline;
    margin-left: 3px;
}
td{
    border-bottom: 1px solid #2a2a2a;
}
tbody tr:first-child{
    background: #494949;
}
.c-tag{ width: 6%; }
.c-name{ width: 39%; }
.c-rate{ width: 20%; }
.c-start{ width: 19%; }
.num{
    font-size: 9px;
}
.tag{
    display: block;
    width: 11px;
    height: 11px;
    margin-left: 4px;
}
.pink{ background: #e286e2; }
.sky{ background: #7199cb; }
.green{ background: #56b35a; }
.mint{ background: #2fd39a; }
.clip-name{
    display: flex;
    align-items: center;
    gap: 9px;
    padding-left: 18px;
}
.bin-scroll{
    margin-top: 16px;
    border-radius: 4px;
    background: #303030;
}
.bin-hscroll{
    align-self: end;
    width: 90px;
    height: 9px;
    border-radius: 4px;
    background: #303030;
}
.project-foot{
    display: flex;
    align-items: center;
    gap: 11px;
    height: 35px;
    padding: 5px 17px 0 11px;
    color: #b8b8b8;
}
.project-foot .blue{
    color: #2d8ceb;
}
.project-foot .off{
    color: #505050;
}
.project-foot input{
    appearance: none;
    width: 54px;
    height: 8px;
    background: linear-gradient(#555, #555) no-repeat center / 100% 1px;
}
.project-foot input::-webkit-slider-thumb{
    appearance: none;
    width: 8px;
    height: 8px;
    border: 2px solid #a8a8a8;
    border-radius: 50%;
    background: #232323;
}
.foot-tools{
    display: flex;
    gap: 13px;
    margin-left: auto;
}

/* tools */
.tools{
    flex: none;
    width: 42px;
    align-items: center;
    padding: 12px 4px 0 0;
    gap: 1px;
    color: #b0b0b0;
}
.tools button{
    position: relative;
    width: 20px;
    height: 20px;
}
.tools .on{
    background: #131313;
}
.tools .sub::after{
    content: "";
    position: absolute;
    right: 1px;
    bottom: 3px;
    border: 1px solid #888;
    border-top-color: transparent;
    border-left-color: transparent;
}

/* timeline */
.timeline{
    flex: 938;
    border: 1px solid #2d6ca8;
}
.timeline-tab{
    display: flex;
    gap: 6px;
    height: 19px;
    padding-left: 6px;
}
.timeline-tab button{
    gap: 8px;
}
.timeline-top{
    display: flex;
    height: 37px;
}
.timeline-left{
    width: 185px;
    padding-left: 13px;
}
.big-timecode{
    color: #2d8ceb;
    font-size: 13px;
    line-height: 22px;
    font-weight: 500;
}
.timeline-options{
    display: flex;
    gap: 15px;
    padding-left: 3px;
    color: #b0b0b0;
}
.timeline-options .blue{
    color: #2d8ceb;
}
.ruler{
    position: relative;
    flex: 1;
    margin-right: 18px;
    overflow: hidden;
}
.ruler-ticks{
    position: absolute;
    left: 0;
    bottom: 2px;
    width: 100%;
    height: 9px;
}
.work-area{
    position: absolute;
    left: 0;
    bottom: 0;
    width: 686px;
    height: 2px;
    background: #dcd94a;
}
.ruler-playhead{
    position: absolute;
    left: 0;
    bottom: 2px;
    width: 5px;
    height: 9px;
}
.hover-line{
    position: absolute;
    left: 175px;
    top: 2px;
    bottom: 2px;
    border-left: 1px solid #777;
}
.time{
    position: absolute;
    top: 12px;
    font-size: 9px;
    transform: translateX(-50%);
}
.time.first{
    transform: none;
}
.tracks{
    flex: 1;
    display: flex;
}
.track-heads{
    width: 185px;
}
.lanes{
    position: relative;
    flex: 1;
    border-left: 1px solid #2d6ca8;
    background: #202020;
}
.video{
    padding-top: 58px;
}
.audio{
    margin-top: 2px;
    border-top: 1px solid #2c2c2c;
}
.lane, .track-head{
    position: relative;
    height: 20px;
    border-top: 1px solid #2e2e2e;
}
.audio .lane:first-child, .audio .track-head:first-child{
    border-top: 0;
    height: 19px;
}
.audio > :last-child{
    border-bottom: 1px solid #2e2e2e;
}
.track-head{
    display: flex;
    align-items: center;
    padding-left: 9px;
    font-size: 9px;
    color: #b8b8b8;
}
.patch{
    width: 25px;
    align-self: stretch;
    color: #a8a8a8;
}
.patch.on{
    background: #075889;
    color: #a9c9e0;
}
.lock{
    width: 16px;
}
.track-buttons{
    display: flex;
    gap: 7px;
    padding-left: 4px;
}
.track-buttons button{
    width: 14px;
}
.master{
    padding-right: 6px;
}
.master .patch + .lock + span{
    padding-left: 2px;
    font-size: 10px;
}
.gain{
    padding-left: 30px;
}
.clip{
    position: absolute;
    top: 0;
    bottom: 0;
    display: flex;
    gap: 7px;
    padding: 2px 0 0 8px;
    background: #7199cb;
    border-left: 1px solid #333;
    color: #1d1d1d;
    font-size: 8px;
    line-height: 9px;
}
.cut-l::before, .cut-r::after{
    content: "";
    position: absolute;
    top: 0;
    border: 2px solid #e8e8e8;
}
.cut-l::before{
    left: 0;
    border-right-color: transparent;
    border-bottom-color: transparent;
}
.cut-r::after{
    right: 0;
    border-left-color: transparent;
    border-bottom-color: transparent;
}
.clip.title{
    padding: 0 0 0 5px;
    border: 2px solid #ececec;
    background: #e286e2;
}
.fx{
    width: 8px;
    height: 8px;
    background: #555;
    color: #aaa;
    font: italic 7px/8px "Liberation Sans", sans-serif;
    text-align: center;
}
.title .fx{
    background: #e0b020;
    color: #333;
}
.note{
    position: absolute;
    left: 64px;
    top: 43px;
    display: flex;
    gap: 6px;
    white-space: nowrap;
    z-index: 2;
    color: #f0281c;
    font-size: 16px;
    line-height: 22px;
}
.note-arrow{
    position: absolute;
    left: 20px;
    top: 53px;
    width: 32px;
    height: 28px;
}
.vbars{
    width: 18px;
    padding: 3px 9px 0 0;
    display: flex;
    flex-direction: column;
    gap: 5px;
}
.vbar{
    width: 8px;
    display: flex;
    flex-direction: column;
    justify-content: space-between;
    height: 114px;
    border-radius: 4px;
    background: #2e2e2e;
}
.timeline-zoom{
    height: 18px;
    padding-left: 9px;
}
.timeline-zoom .zoom-bar{
    width: 449px;
}

/* audio meters */
.meters{
    flex: none;
    width: 85px;
    flex-direction: row;
    padding: 19px 11px 0 10px;
}
.meter{
    flex: 1;
    display: flex;
    flex-direction: column;
}
.clip-lights{
    display: flex;
    height: 8px;
    border: 1px solid #0c0c0c;
}
.clip-lights i{
    flex: 1;
}
.clip-lights i + i{
    border-left: 1px solid #0c0c0c;
}
.levels{
    flex: 1;
    border: 1px solid #0c0c0c;
    border-top: 0;
    border-bottom: 2px solid #8c8a3a;
}
.solo{
    height: 26px;
    display: flex;
    justify-content: space-around;
    align-items: center;
    font-size: 9px;
}
.scale{
    display: flex;
    flex-direction: column;
    justify-content: space-between;
    width: 16px;
    margin: 2px 0 23px 1px;
    padding-left: 5px;
    font-size: 8px;
    line-height: 13px;
    background: repeating-linear-gradient(#555 0 1px, transparent 1px 4px) no-repeat left center / 2px 100%;
}

.status{
    height: 16px;
    margin-top: 2px;
    display: flex;
    align-items: center;
    gap: 29px;
    padding-left: 1px;
    background: #232323;
}
.cloud{
    width: 14px;
    height: 11px;
}
.watermark{
    position: absolute;
    right: 18px;
    bottom: 24px;
    color: #8c8c8ccc;
    font-size: 18px;
    line-height: 24px;
}
```
